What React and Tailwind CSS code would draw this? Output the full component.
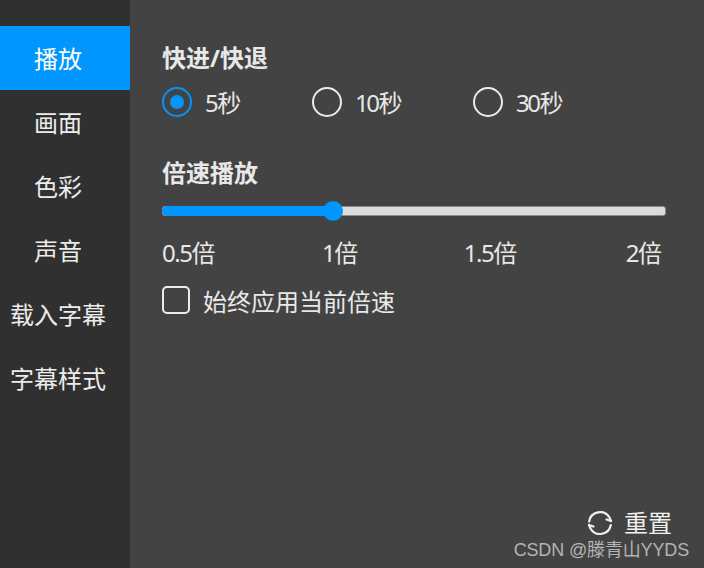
const FONT = "font-['Noto_Sans','Noto_Sans_CJK_SC',sans-serif]";

const NAV = ["播放", "画面", "色彩", "声音", "载入字幕", "字幕样式"];

// digits are tall and narrow in the reference
function Num({ children }) {
  return <span className="tracking-[-1.5px]">{children}</span>;
}

function Radio({ num, checked, className }) {
  return (
    <div className={`flex items-center ${className}`}>
      {checked ? (
        <span className="flex h-[30px] w-[30px] items-center justify-center rounded-full border-2 border-[#0096ff]">
          <span className="h-[14px] w-[14px] rounded-full bg-[#0096ff]" />
        </span>
      ) : (
        <span className="h-[30px] w-[30px] rounded-full border-2 border-[#ececec]" />
      )}
      <span className="ml-[13px] h-[30px] pt-[1px] text-[24px] leading-[30px] text-[#e8e8e8]">
        <span className="tracking-[-2.5px]">{num}</span>
        <span className="ml-[1px]">秒</span>
      </span>
    </div>
  );
}

export default function App() {
  return (
    <div className={`flex h-[568px] w-[704px] overflow-hidden bg-[#434343] ${FONT}`}>
      <aside className="w-[130px] shrink-0 bg-[#303030] pt-[26px]">
        {NAV.map((item, i) => (
          <div
            key={item}
            className={`flex h-[64px] items-center justify-center pr-[14px] pt-[2px] text-[24px] text-[#ececec] ${
              i === 0 ? "bg-[#0096ff] text-white" : ""
            }`}
          >
            {item}
          </div>
        ))}
      </aside>

      <main className="relative flex-1 pl-[32px] pr-[38px] pt-[43px]">
        <h3 className="text-[24px] font-bold leading-[30px] text-[#e8e8e8]">快进/快退</h3>
        <div className="mt-[14px] flex">
          <Radio num="5" checked className="w-[150px]" />
          <Radio num="10" className="w-[161px]" />
          <Radio num="30" />
        </div>

        <h3 className="mt-[41px] text-[24px] font-bold leading-[30px] text-[#e8e8e8]">倍速播放</h3>
        <div className="relative mt-[18px] h-[10px] w-[504px] rounded-[3px] border border-[#8a8a8a] bg-[#dcdcdc]">
          <div className="absolute left-[-1px] top-[-1px] h-[10px] w-[172px] rounded-full bg-[#0096ff]" />
          <div className="absolute left-[160px] top-[-6px] h-[20px] w-[20px] rounded-full bg-[#0096ff]" />
        </div>

        <div className="mt-[22px] flex w-[500px] text-[24px] leading-[30px] text-[#e8e8e8]">
          <span className="w-[160px]"><Num>0.5</Num>倍</span>
          <span className="w-[142px]"><Num>1</Num>倍</span>
          <span className="w-[162px]"><Num>1.5</Num>倍</span>
          <span><Num>2</Num>倍</span>
        </div>

        <div className="mt-[18px] flex items-center">
          <span className="h-[28px] w-[28px] rounded-[5px] border-2 border-[#ececec]" />
          <span className="ml-[13px] h-[28px] pt-[1px] text-[24px] leading-[30px] text-[#e8e8e8]">始终应用当前倍速</span>
        </div>

        <div className="absolute bottom-[32px] right-[32px] flex h-[26px] items-center text-[24px] leading-[26px] text-[#f0f0f0]">
          <svg width="26" height="26" viewBox="0 0 26 26" fill="none" stroke="#f0f0f0" strokeWidth="2.2" strokeLinecap="round" className="mr-[11px]">
            <path d="M2.2 11.5A11 11 0 0 1 22.5 7.5L24 11" />
            <path d="M24 11L19.5 9.5" />
            <path d="M23.8 15A11 11 0 0 1 3.5 18.5L2 15" />
            <path d="M2 15L6.5 16.5" />
          </svg>
          重置
        </div>

        <div className="absolute bottom-[7px] right-[15px] font-['Liberation_Sans','Noto_Sans_CJK_SC',sans-serif] text-[18px] leading-[22px] tracking-[-0.15px] text-[#b4b4b4]">
          CSDN @滕青山YYDS
        </div>
      </main>
    </div>
  );
}
